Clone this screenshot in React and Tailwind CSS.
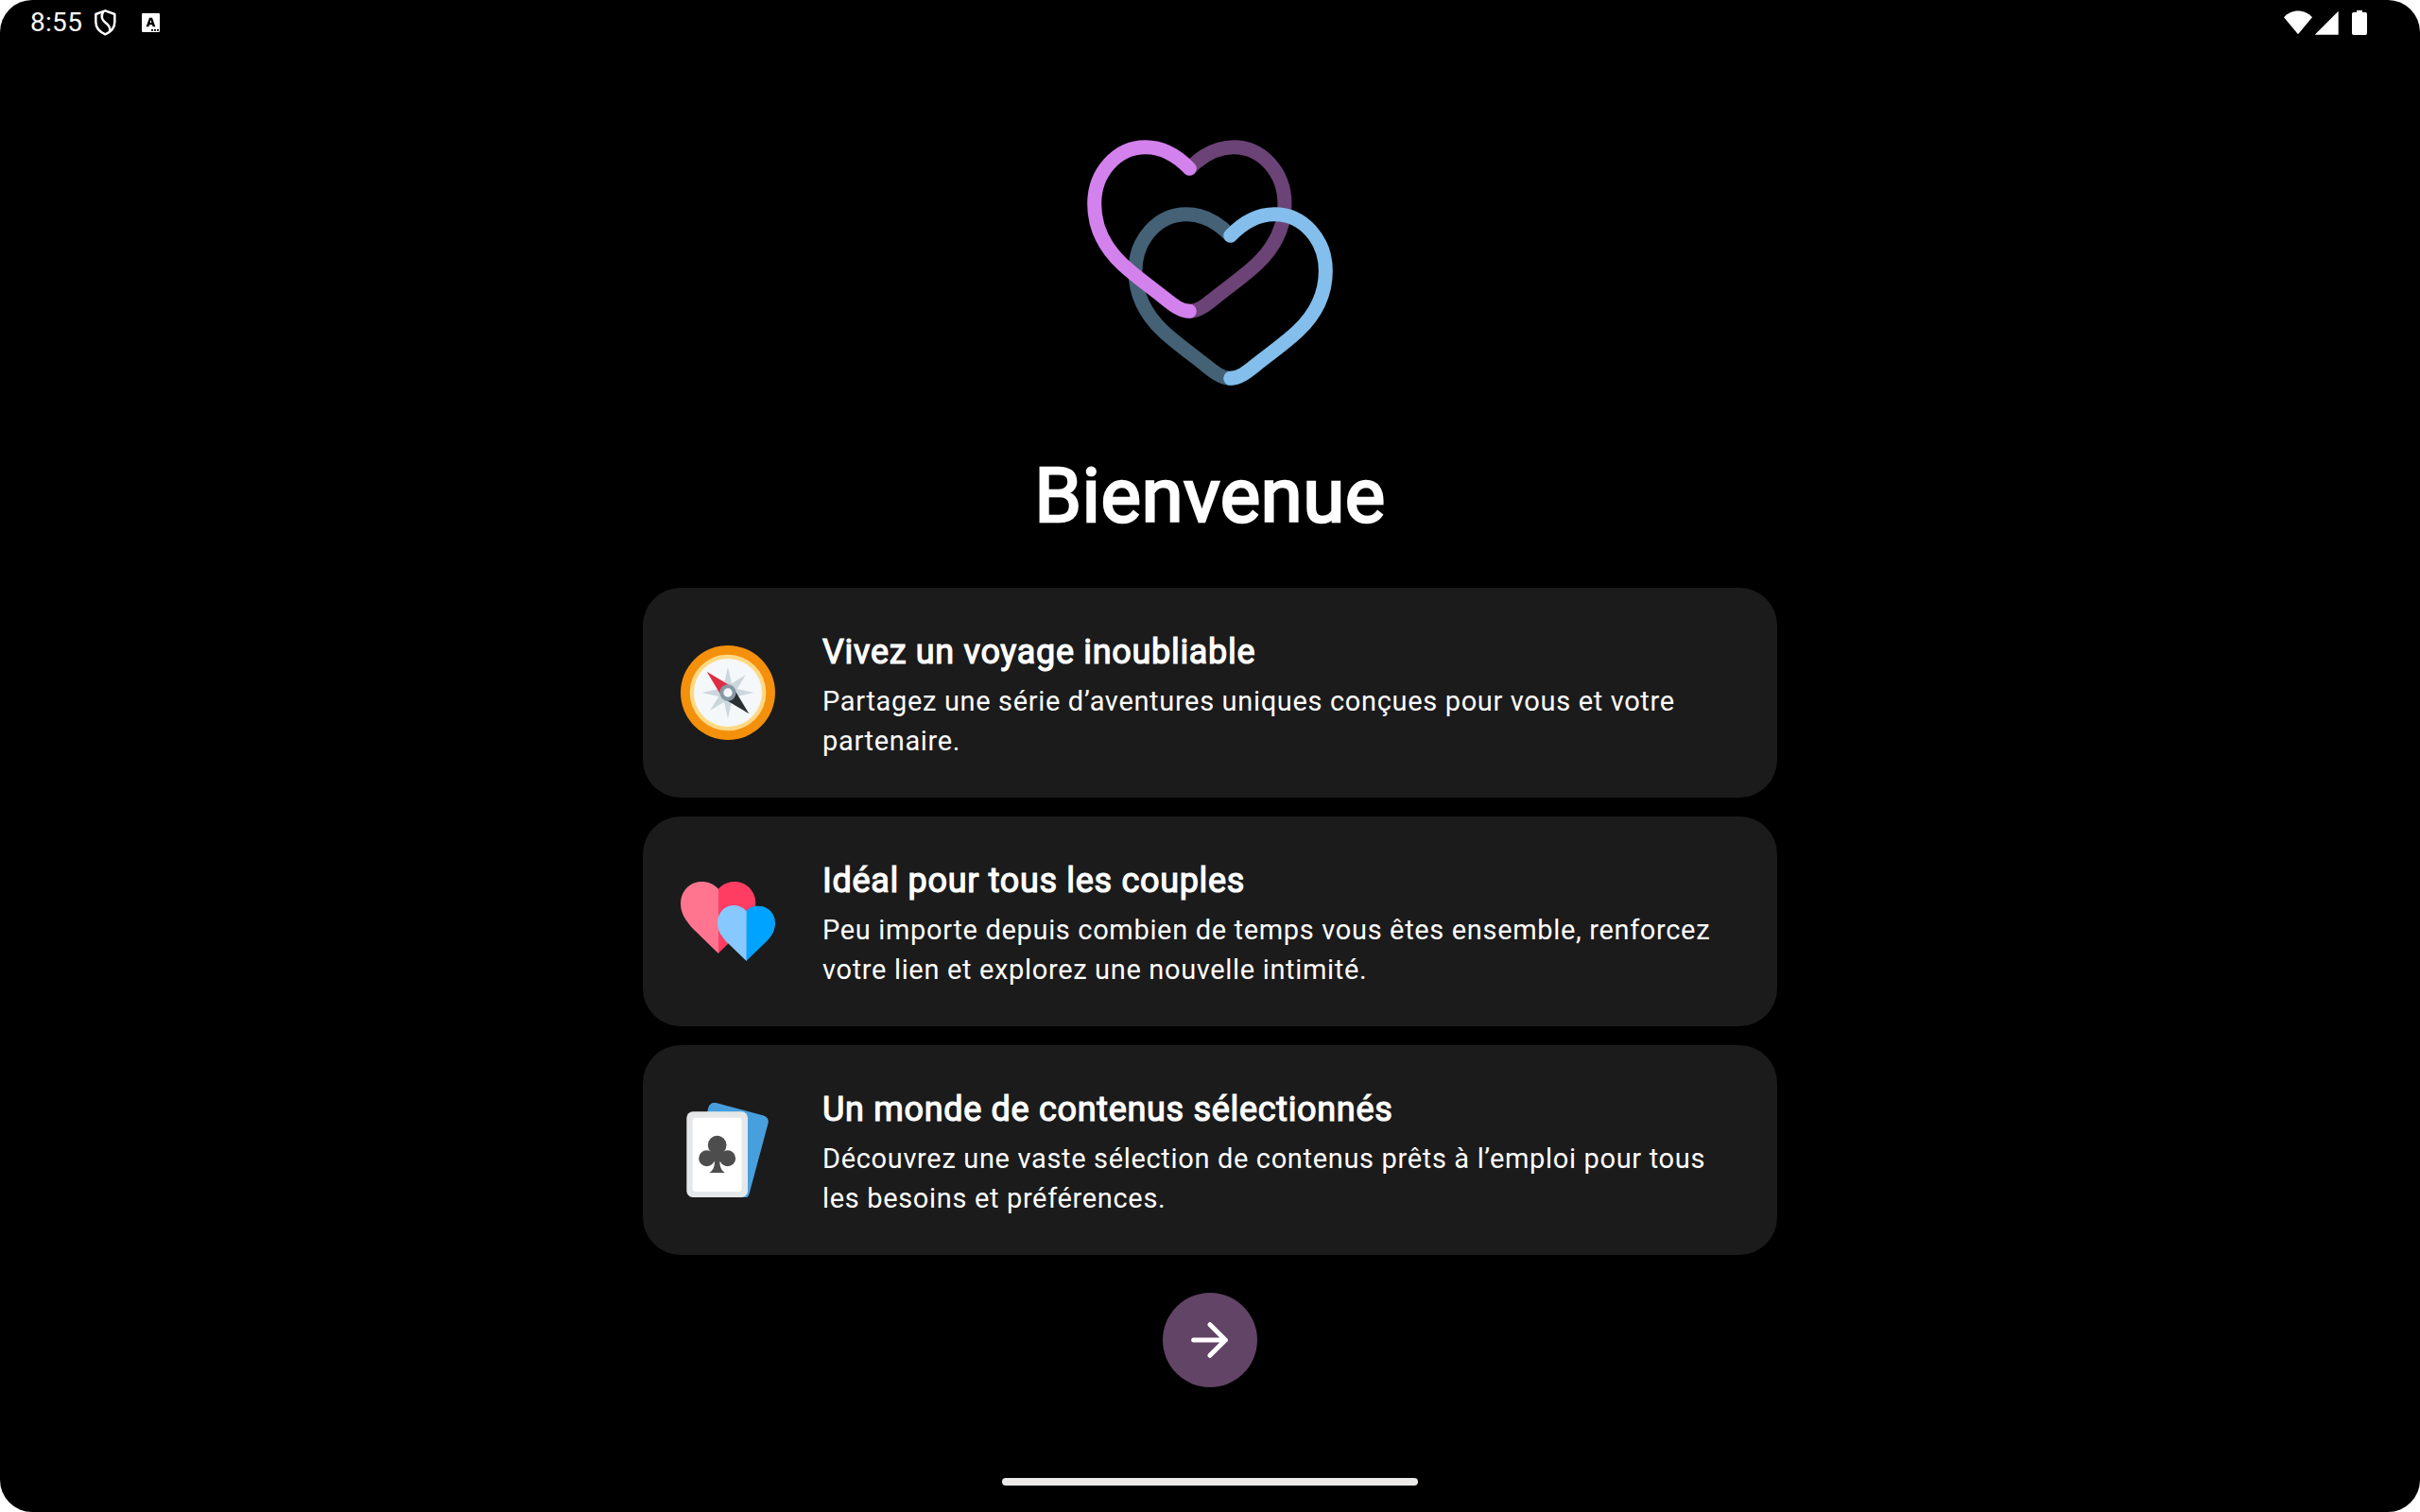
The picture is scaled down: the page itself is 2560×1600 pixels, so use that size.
const HEART_LEFT =
  'M385 145C345 103 297 77 245 77C155 77 83 157 83 257C83 330 115 395 172 449C207 482 249 512 295 548C330 576 355 598 385 598';

function Logo() {
  return (
    <svg className="block size-[300px]" viewBox="0 0 900 900" fill="none" strokeWidth="45" strokeLinecap="round">
      <path d={HEART_LEFT} transform="translate(770 0) scale(-1 1)" stroke="#6b4376" />
      <path d={HEART_LEFT} transform="translate(130 213)" stroke="#446176" />
      <path d={HEART_LEFT} stroke="#d381ed" />
      <path d={HEART_LEFT} transform="translate(900 213) scale(-1 1)" stroke="#83beec" />
    </svg>
  );
}

function Compass() {
  return (
    <svg className="block size-[100px] shrink-0" viewBox="-150 -150 300 300">
      <circle r="150" fill="#f4900c" />
      <circle r="121" fill="#ffd983" />
      <circle r="108" fill="#f5f8fa" />
      <path
        fill="#ccd6dd"
        d="M0-82L12-29L57-57L29-12L82 0L29 12L57 57L12 29L0 82L-12 29L-57 57L-29 12L-82 0L-29-12L-57-57L-12-29Z"
      />
      <path fill="#dd2e44" d="M-67-67L3-25L-25 3Z" />
      <path fill="#292f33" d="M67 67L-3 25L25-3Z" />
      <circle r="20" fill="#f5f8fa" stroke="#8899a6" strokeWidth="12" />
    </svg>
  );
}

function Hearts() {
  return (
    <svg className="block size-[100px] shrink-0" viewBox="60 45 300 300">
      <path fill="#ff3d63" d="M179 93C192 77 211 69 231 69C270 69 298 100 298 138C298 168 284 190 262 215L179 297Z" />
      <path fill="#ff758f" d="M180 93C167 77 147 69 127 69C88 69 60 100 60 138C60 168 74 190 96 215L180 297Z" />
      <path fill="#00a3ff" d="M267 163C277 151 292 146 307 146C338 146 360 170 360 200C360 222 350 240 334 257L268 321Z" />
      <path fill="#87c8ff" d="M269 163C259 151 244 144 229 144C198 144 177 170 177 200C177 222 187 240 203 257L269 321Z" />
    </svg>
  );
}

function Cards() {
  return (
    <svg className="block size-[100px] shrink-0" viewBox="60 51 300 300">
      <rect width="196" height="272" rx="20" fill="#489fde" transform="translate(153.500 46) rotate(15)" />
      <rect x="79" y="79" width="194" height="272" rx="20" fill="#e6e7e8" />
      <rect x="98" y="98" width="156" height="235" rx="9" fill="#fff" />
      <g fill="#4d4d4d">
        <circle cx="176" cy="185" r="29.500" />
        <circle cx="143" cy="227" r="25.500" />
        <circle cx="209" cy="227" r="25.500" />
        <path d="M166 203H186L200 214L184 240C185 256 190 267 201 273H151C162 267 167 256 168 240L152 214Z" />
      </g>
    </svg>
  );
}

function FeatureCard({ icon, title, children }) {
  return (
    <section className="flex h-[222px] items-center rounded-[40px] bg-[#1b1b1b] pl-10">
      {icon}
      <div className="ml-[50px] pt-0.5 text-white">
        <h2 className="text-[36px] leading-[54px] tracking-[0.68px] whitespace-nowrap [-webkit-text-stroke:1.2px_white]">{title}</h2>
        <p className="mt-1 text-[29px] leading-[42px] tracking-[0.66px] whitespace-nowrap">{children}</p>
      </div>
    </section>
  );
}

function StatusBar() {
  return (
    <header className="flex h-12 items-center justify-between pr-[56px] pl-8 text-white">
      <div className="flex items-center">
        <span className="text-[28px] leading-8 tracking-[0.3px]">8:55</span>
        <svg className="ml-[12.500px] h-[28px] w-[23px]" viewBox="0 0 69 84" fill="none" stroke="#fff" strokeWidth="7.500" strokeLinejoin="round">
          <path d="M34 4L64 15V40C64 58 53 71 34 79C15 71 4 58 4 40V15Z" />
          <path d="M27 8C20 22 22 32 34 41C47 50 51 58 48 70" />
        </svg>
        <svg className="ml-[27px] h-[20px] w-[19px]" viewBox="0 0 57 60">
          <rect width="57" height="60" rx="4" fill="#fff" />
          <path fillRule="evenodd" d="M14 43L24 14H33L43 43H35L33 37H24L22 43ZM26 30H31L28.500 21Z" fill="#000" />
          <path d="M30 51H36V56H30ZM39 51H45V56H39ZM48 51H54V56H48Z" fill="#000" />
        </svg>
      </div>
      <svg className="h-[26px] w-[88px]" viewBox="0 0 264 78" fill="#fff">
        <path d="M0 22C24-5 66-5 90 22L45 76Z" />
        <path d="M98 77H173V2Z" />
        <path d="M231 0H249V6H259Q264 6 264 11V73Q264 78 259 78H221Q216 78 216 73V11Q216 6 221 6H231Z" />
      </svg>
    </header>
  );
}

export default function App() {
  return (
    <div className="h-[1600px] w-[2560px] bg-white">
      <div className="flex h-full flex-col overflow-hidden rounded-[34px] bg-black font-[Roboto,sans-serif]">
        <StatusBar />
        <main className="flex flex-1 flex-col items-center pt-[82px]">
          <Logo />
          <h1 className="mt-[39px] h-[153px] text-[80px] leading-[112px] tracking-[0.46px] text-white [-webkit-text-stroke:2.5px_white]">Bienvenue</h1>
          <div className="flex w-[1200px] flex-col gap-5">
            <FeatureCard icon={<Compass />} title="Vivez un voyage inoubliable">
              Partagez une série d’aventures uniques conçues pour vous et votre
              <br />
              partenaire.
            </FeatureCard>
            <FeatureCard icon={<Hearts />} title="Idéal pour tous les couples">
              Peu importe depuis combien de temps vous êtes ensemble, renforcez
              <br />
              votre lien et explorez une nouvelle intimité.
            </FeatureCard>
            <FeatureCard icon={<Cards />} title="Un monde de contenus sélectionnés">
              Découvrez une vaste sélection de contenus prêts à l’emploi pour tous
              <br />
              les besoins et préférences.
            </FeatureCard>
          </div>
          <button aria-label="Continuer" className="mt-10 flex size-[100px] items-center justify-center rounded-full bg-[#624466]">
            <svg className="size-[50px]" viewBox="-75 -75 150 150" fill="none" stroke="#fff" strokeWidth="15" strokeLinecap="round" strokeLinejoin="round">
              <path d="M-52 0H49M0-49L49 0L0 49" />
            </svg>
          </button>
          <div className="mt-auto mb-7 h-2 w-[440px] rounded-full bg-[#ebeae9]" />
        </main>
      </div>
    </div>
  );
}
